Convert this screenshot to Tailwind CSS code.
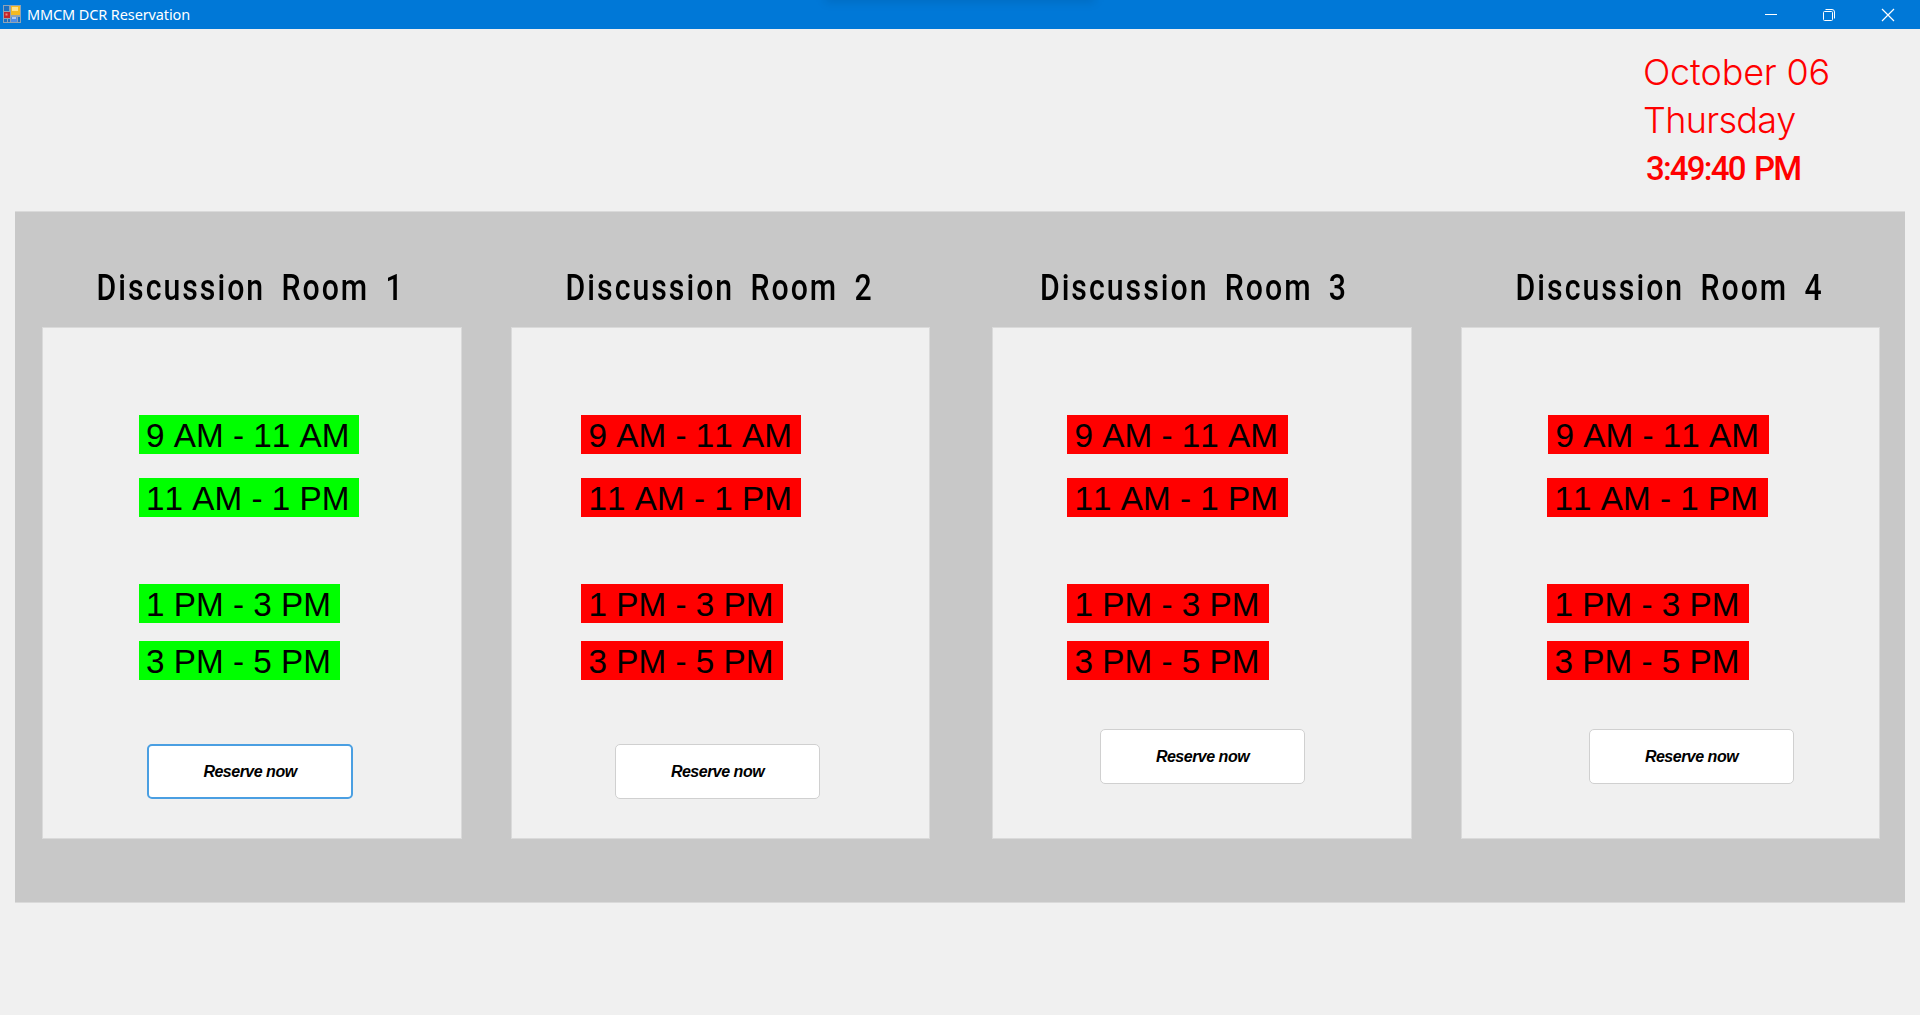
<html lang="en">

<head>
    <meta charset="utf-8" />
    <meta content="width=device-width, initial-scale=1.0" name="viewport" />
    <title>
        MMCM DCR Reservation
    </title>
    <script src="https://cdn.jsdelivr.net/npm/@tailwindcss/browser@4"></script>
    <style>
        body {
            font-family: 'Liberation Sans', Arial, sans-serif;
            font-kerning: none;
        }
    </style>
</head>

<body class="bg-[#f0f0f0] h-screen overflow-hidden text-black">
    <!-- Title bar -->
    <div class="relative flex items-center h-[29px] bg-[#0078d7] text-white overflow-hidden">
        <svg class="ml-[3px] mt-[-1px]" width="18" height="18" viewBox="0 0 18 18">
            <rect width="18" height="18" fill="#8fa3b5" />
            <rect x="1" y="1" width="5" height="5" fill="#1c6fc0" />
            <rect x="1" y="7" width="6" height="6" fill="#c3262b" />
            <rect x="2.5" y="8.5" width="2" height="2" fill="#ee8a80" />
            <rect x="8" y="1" width="9" height="9" fill="#f5b921" />
            <rect x="9" y="2" width="6" height="4" fill="#fde08a" />
            <rect x="1" y="14" width="3" height="3" fill="#1c6fc0" />
            <rect x="5" y="14" width="2" height="3" fill="#1c6fc0" />
            <rect x="8" y="12" width="6" height="5" fill="#4f8de6" />
            <rect x="9" y="12" width="4" height="2" fill="#a9c8fa" />
            <rect x="15" y="12" width="2" height="5" fill="#1c6fc0" />
        </svg>
        <span class="ml-[6px] font-['Noto_Sans',sans-serif] text-[14.5px] leading-none tracking-[-0.12px]">MMCM DCR Reservation</span>
        <!-- Shadow of the snap layout handle -->
        <div class="absolute left-[825px] top-[-8px] w-[270px] h-[10px] bg-black/10 blur-[5px]"></div>
        <div class="ml-auto flex items-center">
            <svg width="58" height="28" viewBox="0 0 58 28" fill="none" stroke="#fff">
                <path d="M23 13.5h12" />
            </svg>
            <svg width="58" height="28" viewBox="0 0 58 28" fill="none" stroke="#fff">
                <rect x="23.5" y="10.5" width="9" height="9" rx="1" />
                <path d="M25.5 8.5h6.500a2.500 2.500 0 0 1 2.500 2.500v6.500" />
            </svg>
            <svg width="62" height="28" viewBox="0 0 62 28" fill="none" stroke="#fff" stroke-width="1.2">
                <path d="M24 8l12 12M36 8l-12 12" />
            </svg>
        </div>
    </div>

    <!-- Date and time -->
    <div class="h-[182px] pt-[19px] pl-[1643px] text-[#ff0000] whitespace-nowrap">
        <p id="date" class="h-12 font-['Inter',sans-serif] font-[340] text-[36px] leading-[49px] tracking-[-0.2px]">October 06</p>
        <p id="day" class="h-12 font-['Inter',sans-serif] font-[340] text-[36px] leading-[48px] tracking-[-0.7px]">Thursday</p>
        <p id="time" class="h-12 pl-[3px] font-['Roboto',sans-serif] font-medium text-[33px] leading-[50px] tracking-[-1.8px] [word-spacing:3px]">3:49:40 PM</p>
    </div>

    <!-- Rooms -->
    <div class="flex mx-[15px] h-[692px] pl-[27px] bg-[#c8c8c8] border-y border-[#dadada]">
        <section class="w-[420px]">
            <h2 class="h-[115px] pt-[52px] pl-[65px] origin-left scale-x-84 font-['Roboto',sans-serif] font-medium text-[36px] leading-[48px] tracking-[2.4px] [word-spacing:8px] whitespace-nowrap">Discussion Room 1</h2>
            <div class="h-[512px] pt-[87px] pl-[96px] bg-[#f0f0f0] border border-[#dadada]">
                <div class="w-[220px] h-[39px] pl-[7px] bg-[#00ff00] text-[33.3px] leading-[41px] whitespace-nowrap">9 AM - 11 AM</div>
                <div class="mt-[24px] w-[220px] h-[39px] pl-[7px] bg-[#00ff00] text-[33.3px] leading-[41px] whitespace-nowrap">11 AM - 1 PM</div>
                <div class="mt-[67px] w-[201px] h-[39px] pl-[7px] bg-[#00ff00] text-[33.3px] leading-[41px] whitespace-nowrap">1 PM - 3 PM</div>
                <div class="mt-[18px] w-[201px] h-[39px] pl-[7px] bg-[#00ff00] text-[33.3px] leading-[41px] whitespace-nowrap">3 PM - 5 PM</div>
                <button class="block mt-[64px] ml-[8px] w-[206px] h-[55px] bg-white border-2 border-[#4a9fe2] rounded-[5px] text-[16px] font-bold italic tracking-[-0.5px]">Reserve now</button>
            </div>
        </section>
        <section class="ml-[49px] w-[419px]">
            <h2 class="h-[115px] pt-[52px] pl-[65px] origin-left scale-x-84 font-['Roboto',sans-serif] font-medium text-[36px] leading-[48px] tracking-[2.4px] [word-spacing:8px] whitespace-nowrap">Discussion Room 2</h2>
            <div class="h-[512px] pt-[87px] pl-[69px] bg-[#f0f0f0] border border-[#dadada]">
                <div class="w-[220px] h-[39px] pl-[7.5px] bg-[#ff0000] text-[33.3px] leading-[41px] whitespace-nowrap">9 AM - 11 AM</div>
                <div class="mt-[24px] w-[220px] h-[39px] pl-[7.5px] bg-[#ff0000] text-[33.3px] leading-[41px] whitespace-nowrap">11 AM - 1 PM</div>
                <div class="mt-[67px] w-[202px] h-[39px] pl-[7.5px] bg-[#ff0000] text-[33.3px] leading-[41px] whitespace-nowrap">1 PM - 3 PM</div>
                <div class="mt-[18px] w-[202px] h-[39px] pl-[7.5px] bg-[#ff0000] text-[33.3px] leading-[41px] whitespace-nowrap">3 PM - 5 PM</div>
                <button class="block mt-[64px] ml-[34px] w-[205px] h-[55px] bg-white border border-[#d0d0d0] rounded-[5px] text-[16px] font-bold italic tracking-[-0.5px]">Reserve now</button>
            </div>
        </section>
        <section class="ml-[62px] w-[420px]">
            <h2 class="h-[115px] pt-[52px] pl-[57px] origin-left scale-x-84 font-['Roboto',sans-serif] font-medium text-[36px] leading-[48px] tracking-[2.4px] [word-spacing:8px] whitespace-nowrap">Discussion Room 3</h2>
            <div class="h-[512px] pt-[87px] pl-[74px] bg-[#f0f0f0] border border-[#dadada]">
                <div class="w-[221px] h-[39px] pl-[7.5px] bg-[#ff0000] text-[33.3px] leading-[41px] whitespace-nowrap">9 AM - 11 AM</div>
                <div class="mt-[24px] w-[221px] h-[39px] pl-[7.5px] bg-[#ff0000] text-[33.3px] leading-[41px] whitespace-nowrap">11 AM - 1 PM</div>
                <div class="mt-[67px] w-[202px] h-[39px] pl-[7.5px] bg-[#ff0000] text-[33.3px] leading-[41px] whitespace-nowrap">1 PM - 3 PM</div>
                <div class="mt-[18px] w-[202px] h-[39px] pl-[7.5px] bg-[#ff0000] text-[33.3px] leading-[41px] whitespace-nowrap">3 PM - 5 PM</div>
                <button class="block mt-[49px] ml-[33px] w-[205px] h-[55px] bg-white border border-[#d0d0d0] rounded-[5px] text-[16px] font-bold italic tracking-[-0.5px]">Reserve now</button>
            </div>
        </section>
        <section class="ml-[49px] w-[419px]">
            <h2 class="h-[115px] pt-[52px] pl-[65px] origin-left scale-x-84 font-['Roboto',sans-serif] font-medium text-[36px] leading-[48px] tracking-[2.4px] [word-spacing:8px] whitespace-nowrap">Discussion Room 4</h2>
            <div class="h-[512px] pt-[87px] pl-[85px] bg-[#f0f0f0] border border-[#dadada]">
                <div class="ml-px w-[221px] h-[39px] pl-[7.5px] bg-[#ff0000] text-[33.3px] leading-[41px] whitespace-nowrap">9 AM - 11 AM</div>
                <div class="mt-[24px] w-[221px] h-[39px] pl-[7.5px] bg-[#ff0000] text-[33.3px] leading-[41px] whitespace-nowrap">11 AM - 1 PM</div>
                <div class="mt-[67px] w-[202px] h-[39px] pl-[7.5px] bg-[#ff0000] text-[33.3px] leading-[41px] whitespace-nowrap">1 PM - 3 PM</div>
                <div class="mt-[18px] w-[202px] h-[39px] pl-[7.5px] bg-[#ff0000] text-[33.3px] leading-[41px] whitespace-nowrap">3 PM - 5 PM</div>
                <button class="block mt-[49px] ml-[42px] w-[205px] h-[55px] bg-white border border-[#d0d0d0] rounded-[5px] text-[16px] font-bold italic tracking-[-0.5px]">Reserve now</button>
            </div>
        </section>
    </div>
</body>

</html>
